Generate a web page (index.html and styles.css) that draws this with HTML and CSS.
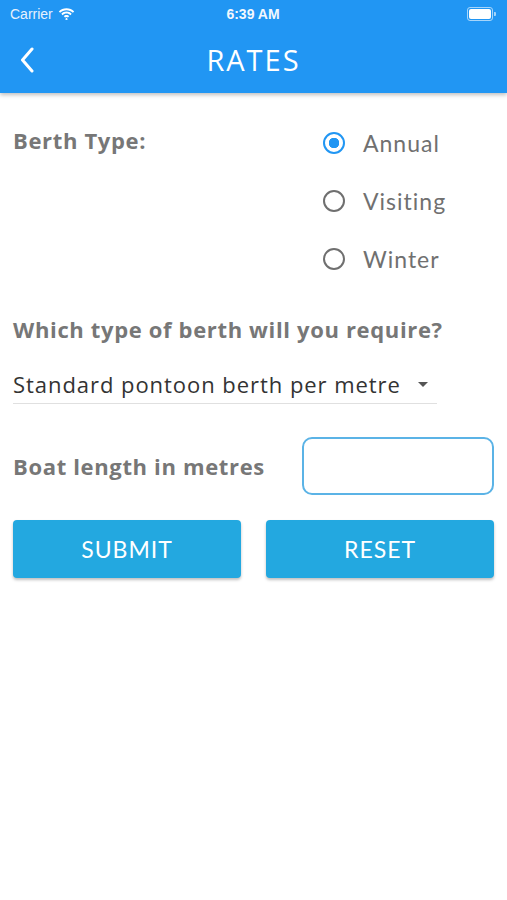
FILE: index.html
```html
<!DOCTYPE html>
<html lang="en">
<head>
  <meta charset="UTF-8" />
  <title>Rates</title>
  <meta name="viewport" content="width=device-width, initial-scale=1" />
  <link rel="stylesheet" href="styles.css">
</head>
<body>
  <div class="header">
    <div class="status-bar">
      <div class="carrier">
        Carrier
        <svg class="wifi" width="17" height="12" viewBox="0 0 17 12">
          <path d="M8.5 2.2c2.5 0 4.7 1 6.4 2.6l1.3-1.4C14.2 1.4 11.5 0.2 8.5 0.2S2.8 1.4 0.8 3.4l1.3 1.4C3.8 3.2 6 2.2 8.5 2.2z" fill="#fff"/>
          <path d="M8.5 5.6c1.5 0 2.9 0.6 3.9 1.6l1.3-1.4C12.3 4.4 10.5 3.6 8.5 3.6S4.7 4.4 3.3 5.8l1.3 1.4c1-1 2.4-1.6 3.9-1.6z" fill="#fff"/>
          <path d="M8.5 8.9c0.6 0 1.1 0.2 1.5 0.6l1.3-1.4C10.6 7.4 9.6 6.9 8.5 6.9S6.4 7.4 5.7 8.1l1.3 1.4c0.4-0.4 0.9-0.6 1.5-0.6zM8.5 9.8l1.5 1.5-1.5 0.7-1.5-0.7z" fill="#fff"/>
        </svg>
      </div>
      <div class="time">6:39 AM</div>
      <div class="battery">
        <span class="battery-body"><span class="battery-level"></span></span>
        <span class="battery-nub"></span>
      </div>
    </div>
    <div class="nav-bar">
      <svg class="back" width="14" height="26" viewBox="0 0 14 26">
        <path d="M12 2 L2.5 13 L12 24" fill="none" stroke="#fff" stroke-width="3" stroke-linecap="round" stroke-linejoin="round"/>
      </svg>
      <h1>RATES</h1>
    </div>
  </div>

  <div class="content">
    <div class="berth-row">
      <div class="label berth-label">Berth Type:</div>
      <div class="radio-group">
        <div class="radio-row">
          <span class="radio checked"></span>
          <span class="radio-text">Annual</span>
        </div>
        <div class="radio-row">
          <span class="radio"></span>
          <span class="radio-text">Visiting</span>
        </div>
        <div class="radio-row">
          <span class="radio"></span>
          <span class="radio-text">Winter</span>
        </div>
      </div>
    </div>

    <div class="label question">Which type of berth will you require?</div>
    <div class="dropdown">
      <span>Standard pontoon berth per metre</span>
      <span class="caret"></span>
    </div>

    <div class="length-row">
      <div class="label">Boat length in metres</div>
      <div class="length-input"></div>
    </div>

    <div class="buttons">
      <button class="btn">SUBMIT</button>
      <button class="btn">RESET</button>
    </div>
  </div>
</body>
</html>
```

FILE: styles.css
```css
body {
  margin: 0;
  font-family: Lato, "Open Sans", sans-serif;
  background-color: #fff;
  width: 507px;
  height: 900px;
  overflow: hidden;
}

.header {
  background-color: #2196f3;
  height: 93px;
  box-shadow: 0 2px 4px rgba(0,0,0,0.25);
  color: #fff;
}

.status-bar {
  height: 27px;
  display: flex;
  align-items: center;
  justify-content: space-between;
  padding: 0 10px;
}

.carrier {
  display: flex;
  align-items: center;
  gap: 5px;
  font-family: "Liberation Sans", Arial, sans-serif;
  font-size: 14px;
  color: #e6f1fd;
  width: 120px;
}

.time {
  font-family: "Liberation Sans", Arial, sans-serif;
  font-weight: bold;
  font-size: 14px;
  color: #f2f8fe;
}

.battery {
  width: 120px;
  display: flex;
  justify-content: flex-end;
  align-items: center;
  padding-right: 1px;
}

.battery-body {
  width: 22px;
  height: 10px;
  border: 1px solid rgba(255,255,255,0.6);
  border-radius: 3px;
  padding: 1px;
  display: flex;
}

.battery-level {
  flex: 1;
  background-color: #fff;
  border-radius: 2px;
}

.battery-nub {
  width: 2px;
  height: 4px;
  background-color: rgba(255,255,255,0.6);
  border-radius: 0 1px 1px 0;
  margin-left: 1px;
}

.nav-bar {
  height: 66px;
  display: flex;
  align-items: center;
  justify-content: center;
  position: relative;
}

.nav-bar .back {
  position: absolute;
  left: 20px;
  top: 20px;
}

.nav-bar h1 {
  margin: 0;
  font-family: "Open Sans", sans-serif;
  font-weight: 400;
  font-size: 29px;
  letter-spacing: 2px;
  margin-top: -1px;
}

.content {
  padding: 21px 13px 0 13px;
}

.label {
  font-family: "Open Sans", sans-serif;
  font-weight: 700;
  font-size: 22px;
  color: #777;
  letter-spacing: 0.65px;
}

.berth-row {
  display: flex;
  justify-content: space-between;
}

.berth-label {
  line-height: 52px;
}

.radio-group {
  width: 172px;
}

.radio-row {
  height: 58px;
  display: flex;
  align-items: center;
  gap: 18px;
}

.radio {
  width: 18px;
  height: 18px;
  border: 2px solid #6f6f6f;
  border-radius: 50%;
  margin-left: 1px;
}

.radio.checked {
  border-color: #2196f3;
  background: radial-gradient(circle, #2196f3 0 5px, #fff 5.5px);
}

.radio-text {
  font-size: 23px;
  color: #707070;
  letter-spacing: 1px;
}

.question {
  margin-top: 26px;
  line-height: 30px;
}

.dropdown {
  margin-top: 21px;
  width: 424px;
  height: 38px;
  border-bottom: 1px solid #e0e0e0;
  display: flex;
  align-items: center;
  justify-content: space-between;
  font-family: "Open Sans", sans-serif;
  font-size: 22px;
  color: #333;
  letter-spacing: 0.95px;
}

.caret {
  width: 0;
  height: 0;
  border-left: 5px solid transparent;
  border-right: 5px solid transparent;
  border-top: 5px solid #555;
  margin-right: 9px;
}

.length-row {
  margin-top: 33px;
  display: flex;
  align-items: center;
  justify-content: space-between;
}

.length-input {
  width: 188px;
  height: 54px;
  border: 2px solid #5bb3e6;
  border-radius: 10px;
}

.buttons {
  margin-top: 25px;
  display: flex;
  gap: 25px;
}

.btn {
  flex: 1;
  height: 58px;
  background-color: #23a8e0;
  color: #fff;
  border: none;
  border-radius: 4px;
  box-shadow: 0 2px 3px rgba(0,0,0,0.25);
  font-family: Lato, "Open Sans", sans-serif;
  font-size: 23px;
  letter-spacing: 1px;
}
```
